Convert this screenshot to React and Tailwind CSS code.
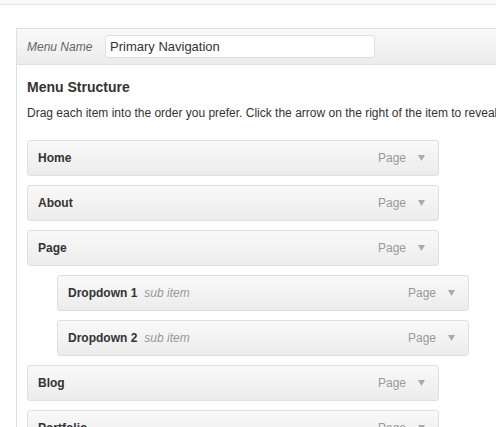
import React from "react";

const items = [
  { title: "Home", depth: 0 },
  { title: "About", depth: 0 },
  { title: "Page", depth: 0 },
  { title: "Dropdown 1", depth: 1 },
  { title: "Dropdown 2", depth: 1 },
  { title: "Blog", depth: 0 },
  { title: "Portfolio", depth: 0 },
];

const MenuItem = ({ item }) => (
  <div className={item.depth ? "pl-[30px] mb-[9px]" : "mb-[9px]"}>
    <div className="w-[412px] h-[36px] flex items-center justify-between border border-[#dfdfdf] rounded-[3px] bg-gradient-to-b from-[#f9f9f9] to-[#ececec] pl-[10px] pr-[13px]">
      <div className="flex items-center gap-[7px]">
        <span className="text-[12px] font-bold text-[#333]">{item.title}</span>
        {item.depth > 0 && (
          <span className="text-[12px] italic text-[#999]">sub item</span>
        )}
      </div>
      <div className="flex items-center gap-[12px]">
        <span className="text-[12px] text-[#999]">Page</span>
        <svg width="7" height="6" viewBox="0 0 7 6">
          <path d="M0 0h7L3.5 6z" fill="#aaa" />
        </svg>
      </div>
    </div>
  </div>
);

export default function App() {
  return (
    <div
      className="w-[496px] h-[427px] overflow-hidden bg-white"
      style={{ fontFamily: '"Liberation Sans", Arial, sans-serif' }}
    >
      <div className="h-[5px] bg-[#f9f9f9] border-b border-[#e5e5e5]" />
      <div className="ml-[16px] mt-[23px] w-[600px] border border-[#dfdfdf]">
        <div className="h-[36px] flex items-center bg-gradient-to-b from-[#f9f9f9] to-[#ececec] border-b border-[#dfdfdf] px-[10px]">
          <span className="text-[12px] italic text-[#666] w-[78px]">Menu Name</span>
          <div className="w-[270px] h-[23px] bg-white border border-[#dfdfdf] rounded-[3px] flex items-center px-[4px]">
            <span className="text-[13px] text-[#333]">Primary Navigation</span>
          </div>
        </div>
        <div className="px-[10px] pt-[13px]">
          <h3 className="text-[14px] font-bold text-[#333] leading-[18px]">Menu Structure</h3>
          <p className="mt-[9px] text-[12px] text-[#333] whitespace-nowrap leading-[16px]">
            Drag each item into the order you prefer. Click the arrow on the right of the item to reveal additional configuration options.
          </p>
          <div className="mt-[19px]">
            {items.map((item) => (
              <MenuItem key={item.title} item={item} />
            ))}
          </div>
        </div>
      </div>
    </div>
  );
}
